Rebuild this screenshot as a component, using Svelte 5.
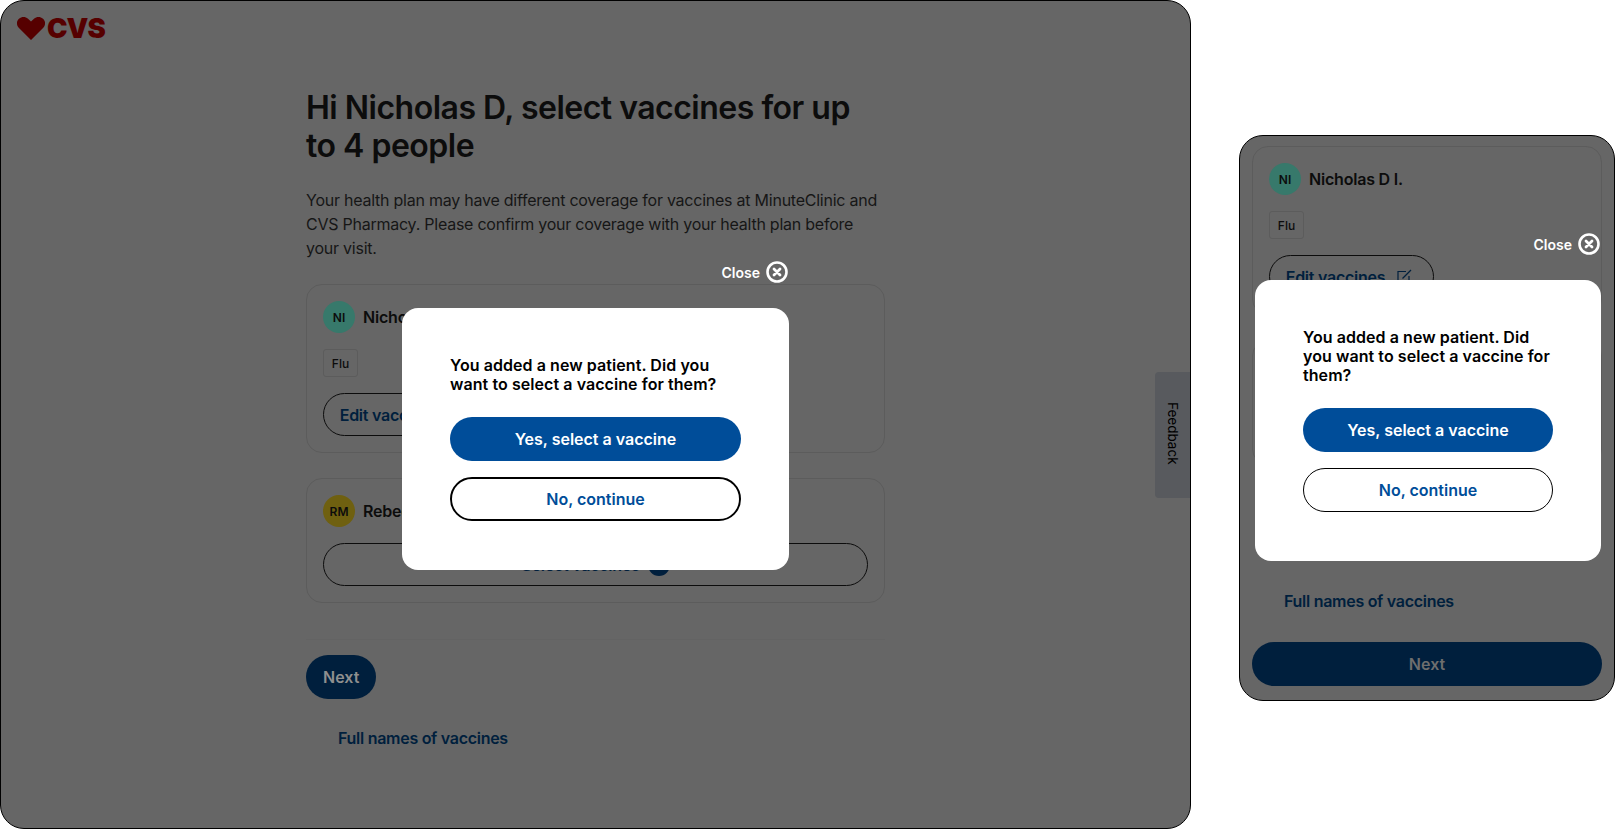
<script lang="ts">
  const people = [
    { initials: "NI", name: "Nicholas D I.", color: "#37796b", vaccines: ["Flu"] },
    { initials: "RM", name: "Rebecca M.", color: "#6f6010", vaccines: [] as string[] },
  ];
</script>

{#snippet card(person: (typeof people)[number])}
  <section class="card">
    <div class="person">
      <span class="avatar" style="background: {person.color}">{person.initials}</span>
      <span class="name">{person.name}</span>
    </div>
    {#if person.vaccines.length}
      <div class="tags">
        {#each person.vaccines as v}
          <span class="tag">{v}</span>
        {/each}
      </div>
      <button class="outline edit">
        Edit vaccines
        <svg width="15" height="15" viewBox="0 0 15 15" fill="none" stroke="currentColor" stroke-width="1.2">
          <path d="M9 2.500H1v11h11V7" />
          <path d="M5.500 9.500L14 1" />
        </svg>
      </button>
    {:else}
      <button class="outline select">
        Select vaccines
        <span class="plus">+</span>
      </button>
    {/if}
  </section>
{/snippet}

{#snippet dialog()}
  <div class="overlay">
    <div class="stack">
      <button class="close">
        Close
        <svg width="22" height="22" viewBox="0 0 22 22" fill="none" stroke="#fff">
          <circle cx="11" cy="11" r="9.5" stroke-width="2.6" />
          <path d="M8 8l6 6M14 8l-6 6" stroke-width="2.8" stroke-linecap="round" />
        </svg>
      </button>
      <div class="modal">
        <p class="question">You added a new patient. Did you want to select a vaccine for them?</p>
        <button class="yes">Yes, select a vaccine</button>
        <button class="no">No, continue</button>
      </div>
    </div>
  </div>
{/snippet}

<div class="page">
  <div class="frame desktop">
    <header class="logo">
      <svg width="28" height="23" viewBox="0 0 28 23">
        <path d="M14 23L1.500 10.500C-.8 8-.5 3.800 2 1.800 4.800-.6 8.500-.4 11 1.800l3 2.700 3-2.700c2.500-2.200 6.200-2.400 9-0 2.500 2 2.800 6.200.5 8.700z" fill="#560000" />
      </svg>
      <span>CVS</span>
    </header>
    <main class="content">
      <h1>Hi Nicholas D, select vaccines for up to 4 people</h1>
      <p class="intro">
        Your health plan may have different coverage for vaccines at MinuteClinic and CVS Pharmacy. Please confirm your coverage with your health plan before your visit.
      </p>
      <div class="cards">
        {#each people as p}
          {@render card(p)}
        {/each}
      </div>
      <hr />
      <button class="next">Next</button>
      <a class="names" href="#names">Full names of vaccines</a>
    </main>
    <button class="feedback"><span>Feedback</span></button>
    {@render dialog()}
  </div>

  <div class="frame mobile">
    <div class="cards">
      {#each people as p}
        {@render card(p)}
      {/each}
    </div>
    <div class="footer">
      <a class="names" href="#names">Full names of vaccines</a>
      <button class="next">Next</button>
    </div>
    {@render dialog()}
  </div>
</div>

<style>
  :global(body) {
    margin: 0;
    background: #fff;
    font-family: Inter, "Liberation Sans", sans-serif;
  }

  .page {
    display: flex;
    align-items: flex-start;
    gap: 48px;
    width: 1616px;
    height: 830px;
    overflow: hidden;
  }

  .frame {
    position: relative;
    box-sizing: border-box;
    background: #666;
    border: 1px solid #000;
    overflow: hidden;
    flex-shrink: 0;
    color: #0c0c0c;
  }

  .desktop {
    width: 1191px;
    height: 829px;
    border-radius: 24px;
  }

  .mobile {
    display: flex;
    flex-direction: column;
    width: 376px;
    height: 566px;
    margin-top: 135px;
    padding: 10px 12px 14px;
    border-radius: 24px;
  }

  .logo {
    display: flex;
    align-items: center;
    gap: 2px;
    height: 24px;
    padding: 15px 0 0 16px;
  }

  .logo span {
    font-size: 27.5px;
    font-weight: 900;
    letter-spacing: -1px;
    color: #560000;
  }

  .content {
    width: 579px;
    margin-left: 305px;
    padding-top: 49px;
  }

  h1 {
    margin: 0;
    font-size: 32px;
    line-height: 38px;
    font-weight: 600;
    letter-spacing: -0.5px;
  }

  .intro {
    margin: 23px 0 24px;
    font-size: 16px;
    line-height: 24px;
    letter-spacing: -0.24px;
    color: #161616;
  }

  .cards {
    display: flex;
    flex-direction: column;
    gap: 25px;
  }

  .card {
    display: flex;
    flex-direction: column;
    align-items: flex-start;
    gap: 16px;
    padding: 16px;
    border: 1px solid #5c5c5c;
    border-radius: 16px;
  }

  .person {
    display: flex;
    align-items: center;
    gap: 8px;
  }

  .avatar {
    display: grid;
    place-items: center;
    width: 32px;
    height: 32px;
    border-radius: 50%;
    font-size: 12px;
    font-weight: 600;
  }

  .name {
    font-size: 16px;
    font-weight: 600;
    letter-spacing: -0.2px;
  }

  .tags {
    display: flex;
    gap: 8px;
  }

  .tag {
    display: grid;
    place-items: center;
    box-sizing: border-box;
    width: 35px;
    height: 28px;
    border: 1px solid #5c5c5c;
    border-radius: 3px;
    font-size: 12px;
    font-weight: 500;
  }

  button {
    font-family: inherit;
    cursor: pointer;
  }

  .outline {
    display: flex;
    align-items: center;
    justify-content: center;
    gap: 12px;
    box-sizing: border-box;
    height: 43px;
    background: transparent;
    border: 1px solid #0c0c0c;
    border-radius: 22px;
    font-size: 16px;
    font-weight: 600;
    letter-spacing: -0.25px;
    color: #001f3d;
  }

  .edit {
    width: 165px;
    padding: 0 5px 0 0;
  }

  .select {
    width: 100%;
    gap: 8px;
  }

  .plus {
    display: grid;
    place-items: center;
    width: 22px;
    height: 22px;
    border-radius: 50%;
    background: #001f3d;
    color: #666;
    font-size: 16px;
  }

  hr {
    height: 1px;
    margin: 36px 0 15px;
    border: 0;
    background: #636363;
  }

  .next {
    display: block;
    height: 44px;
    padding: 0 17px;
    border: 0;
    border-radius: 22px;
    background: #001f3d;
    color: #8f8f8f;
    font-size: 16px;
    font-weight: 600;
  }

  .names {
    display: block;
    padding-left: 32px;
    font-size: 16px;
    line-height: 24px;
    font-weight: 600;
    letter-spacing: -0.28px;
    color: #001f3d;
    text-decoration: none;
  }

  .content .names {
    margin-top: 27px;
  }

  .footer {
    display: flex;
    flex-direction: column;
    margin-top: auto;
    gap: 29px;
  }

  .mobile .next {
    width: 100%;
    color: #6e6e6e;
  }

  .feedback {
    position: absolute;
    top: 371px;
    right: 0;
    width: 35px;
    height: 126px;
    padding: 0;
    border: 0;
    border-radius: 4px 0 0 4px;
    background: #585a5e;
    color: #000;
    font-size: 13.5px;
  }

  .feedback span {
    writing-mode: vertical-rl;
  }

  .overlay {
    position: absolute;
    inset: 0;
    display: flex;
    align-items: center;
    justify-content: center;
    padding-top: 2px;
  }

  .mobile .overlay {
    padding: 0 0 42px 2px;
  }

  .stack {
    display: flex;
    flex-direction: column;
    align-items: flex-end;
    gap: 25px;
  }

  .close {
    display: flex;
    align-items: center;
    gap: 6px;
    padding: 0;
    margin-right: 1px;
    border: 0;
    background: none;
    color: #fff;
    font-size: 14px;
    font-weight: 600;
  }

  .modal {
    display: flex;
    flex-direction: column;
    gap: 16px;
    box-sizing: border-box;
    width: 387px;
    padding: 48px 48px 49px;
    background: #fff;
    border-radius: 16px;
  }

  .mobile .modal {
    width: 346px;
  }

  .question {
    margin: 0 0 7px;
    font-size: 16px;
    line-height: 19px;
    font-weight: 600;
    letter-spacing: 0.07px;
    color: #000;
  }

  .yes,
  .no {
    box-sizing: border-box;
    height: 44px;
    border-radius: 22px;
    font-size: 16px;
    font-weight: 600;
  }

  .yes {
    border: 0;
    background: #004d99;
    color: #fff;
  }

  .no {
    border: 2px solid #000;
    background: #fff;
    color: #004d99;
  }

  .mobile .no {
    border-width: 1px;
  }
</style>
